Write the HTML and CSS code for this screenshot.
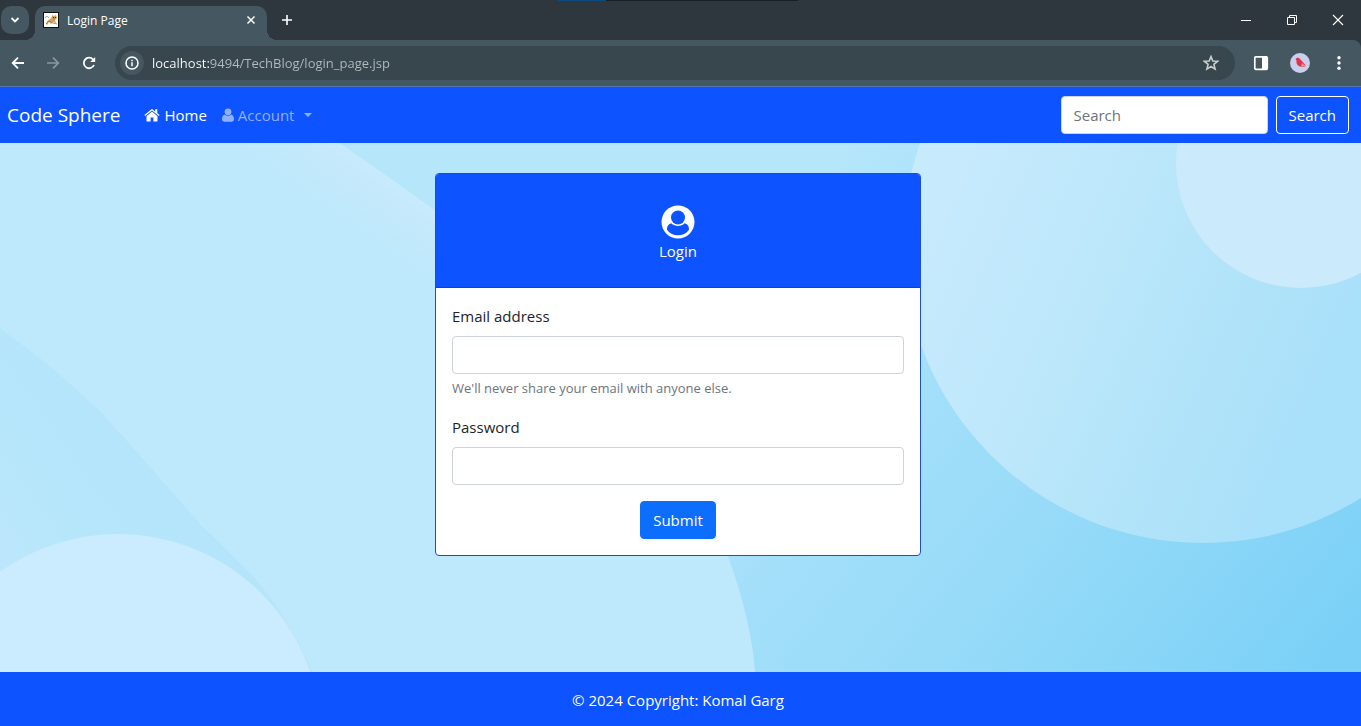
FILE: index.html
```html
<!DOCTYPE html>
<html lang="en">
<head>
<meta charset="utf-8">
<meta name="viewport" content="width=device-width, initial-scale=1">
<title>Login Page</title>
<link rel="stylesheet" href="styles.css">
</head>
<body>
<header class="browser">
  <div class="tabstrip">
    <div class="tab-search-wrap">
      <button class="tab-search" type="button" aria-label="Search tabs">
        <svg width="10" height="8" viewBox="0 0 10 8"><path d="M1.5 2 5 5.500 8.500 2" fill="none" stroke="#fff" stroke-width="1.800"/></svg>
      </button>
    </div>
    <div class="tab">
      <svg class="favicon" width="16" height="16" viewBox="0 0 16 16">
        <rect x=".5" y=".5" width="15" height="15" fill="#fff" stroke="#111"/>
        <path d="M3 12 4 9 7 7 9 5 9 3 11 4 13 3 14 6 12 8 13 11 10 10 8 12 6 10 4 13Z" fill="#d2a45c"/>
        <path d="M2 6C3 4 5 4 6 6M3 12 6 9 10 11 14 12M10 7 12 7" fill="none" stroke="#8c7757" stroke-width=".8"/>
        <circle cx="10.500" cy="5.500" r=".6" fill="#222"/><circle cx="12.500" cy="5.500" r=".6" fill="#222"/>
      </svg>
      <span class="tab-title">Login Page</span>
      <button class="icon-btn tab-close" type="button" aria-label="Close tab">
        <svg width="10" height="10" viewBox="0 0 10 10"><path d="M1.500 1.500 8.500 8.500M8.500 1.500 1.500 8.500" stroke="#fff" stroke-width="1.500"/></svg>
      </button>
    </div>
    <button class="icon-btn new-tab" type="button" aria-label="New tab">
      <svg width="12" height="12" viewBox="0 0 12 12"><path d="M6 1V11M1 6H11" stroke="#fff" stroke-width="1.600"/></svg>
    </button>
    <div class="window-controls">
      <button class="icon-btn" type="button" aria-label="Minimize"><svg width="12" height="12" viewBox="0 0 12 12"><path d="M1 6.500H11" stroke="#fff"/></svg></button>
      <button class="icon-btn" type="button" aria-label="Restore"><svg width="12" height="12" viewBox="0 0 12 12"><path d="M1.500 3.500H8.500V10.500H1.500ZM3.500 3.500V1.500H10.500V8.500H8.500" fill="none" stroke="#fff"/></svg></button>
      <button class="icon-btn" type="button" aria-label="Close"><svg width="12" height="12" viewBox="0 0 12 12"><path d="M1 1 11 11M11 1 1 11" stroke="#fff" stroke-width="1.100"/></svg></button>
    </div>
  </div>
  <div class="toolbar">
    <div class="history">
      <button class="icon-btn" type="button" aria-label="Back"><svg width="14" height="14" viewBox="0 0 14 14"><path d="M13 7H2M7 1.700 1.700 7 7 12.300" fill="none" stroke="#fff" stroke-width="1.800"/></svg></button>
      <button class="icon-btn" type="button" aria-label="Forward"><svg width="14" height="14" viewBox="0 0 14 14"><path d="M1 7H12M7 1.700 12.300 7 7 12.300" fill="none" stroke="#8b989e" stroke-width="1.700"/></svg></button>
      <button class="icon-btn" type="button" aria-label="Reload"><svg width="14" height="14" viewBox="0 0 14 14"><path d="M12 9A5.300 5.300 0 1 1 11 3.300L12.500 5" fill="none" stroke="#fff" stroke-width="1.800"/><path d="M13.200 1V6H8.200Z" fill="#fff"/></svg></button>
    </div>
    <div class="omnibox">
      <button class="site-info" type="button" aria-label="View site information">
        <svg width="14" height="14" viewBox="0 0 14 14"><circle cx="7" cy="7" r="6" fill="none" stroke="#fff" stroke-width="1.600"/><path d="M7 6.200V10.300M7 3.700V5.200" stroke="#fff" stroke-width="1.500"/></svg>
      </button>
      <input class="address" type="text" aria-label="Address" value="localhost:9494/TechBlog/login_page.jsp">
      <button class="icon-btn" type="button" aria-label="Bookmark this tab"><svg width="16" height="16" viewBox="0 0 16 16"><path d="M8 1.600 9.800 6 14.600 6.300 10.900 9.400 12.100 14.100 8 11.500 3.900 14.100 5.100 9.400 1.400 6.300 6.200 6Z" fill="none" stroke="#c9cdd0" stroke-width="1.600"/></svg></button>
    </div>
    <div class="tools">
      <button class="icon-btn" type="button" aria-label="Side panel"><svg width="16" height="16" viewBox="0 0 16 16"><rect x="1.800" y="1.800" width="12.500" height="12.500" rx="1" fill="none" stroke="#fff" stroke-width="1.700"/><path d="M9 1H14V15H9Z" fill="#fff"/></svg></button>
      <button class="icon-btn" type="button" aria-label="Profile"><svg width="20" height="20" viewBox="0 0 20 20"><circle cx="10" cy="10" r="10" fill="#c9cfec"/><path d="M5.500 6C7 4 9 4.500 10 6L15.500 12 15 14 11 13.500C8 13.500 6 11 6.500 7.500Z" fill="#e0344d"/><path d="M12 10 15.500 12.500 15 14 11 13Z" fill="#f08a8d"/></svg></button>
      <button class="icon-btn" type="button" aria-label="Menu"><svg width="16" height="16" viewBox="0 0 16 16"><circle cx="8" cy="2.700" r="1.700" fill="#fff"/><circle cx="8" cy="8" r="1.700" fill="#fff"/><circle cx="8" cy="13.300" r="1.700" fill="#fff"/></svg></button>
    </div>
  </div>
</header>

<nav class="navbar">
  <a class="brand" href="#">Code Sphere</a>
  <a class="nav-item active" href="#">
    <svg width="16" height="14" viewBox="0 0 16 14"><path d="M8 3.600 2.500 8.200V12.900Q2.500 13.400 3 13.400H6.600V9.600H9.400V13.400H13Q13.500 13.400 13.500 12.900V8.200Z" fill="#fff"/><path d="M13.300 5.300V1.200H11.200V3.400L8.800 1.400Q8 .8 7.200 1.400L.4 7.100 1.200 8 8 2.400 14.800 8 15.600 7.100Z" fill="#fff"/></svg>
    Home
  </a>
  <button class="nav-item dropdown" type="button" aria-haspopup="true">
    <svg width="12" height="14" viewBox="0 0 12 14"><circle cx="6" cy="3.800" r="3.400" fill="currentColor"/><path d="M2.700 6.500C.8 7 0 9 0 11.200 0 12.800 1 13.700 2.300 13.700H9.700C11 13.700 12 12.800 12 11.200 12 9 11.200 7 9.300 6.500 7.500 8.300 4.500 8.300 2.700 6.500Z" fill="currentColor"/></svg>
    Account
    <svg class="caret" width="8" height="4" viewBox="0 0 8 4"><path d="M0 0H8L4 4Z" fill="currentColor"/></svg>
  </button>
  <form class="search" role="search">
    <input class="field search-field" type="search" placeholder="Search" aria-label="Search">
    <button class="btn btn-outline" type="button">Search</button>
  </form>
</nav>

<main class="page">
  <svg class="backdrop" viewBox="0 0 1361 529" preserveAspectRatio="xMidYMid slice" aria-hidden="true">
    <defs>
      <linearGradient id="sky" gradientUnits="userSpaceOnUse" x1="850" y1="7" x2="1396" y2="448">
        <stop offset="0" stop-color="#b5e6fa"/><stop offset=".28" stop-color="#a4dffa"/><stop offset=".58" stop-color="#95daf8"/><stop offset="1" stop-color="#7ad0f7"/>
      </linearGradient>
      <linearGradient id="orb" gradientUnits="userSpaceOnUse" x1="920" y1="60" x2="1330" y2="240">
        <stop offset="0" stop-color="#c8eafd"/><stop offset=".4" stop-color="#bde7fb"/><stop offset=".65" stop-color="#b3e4f9"/><stop offset="1" stop-color="#a9e0fa"/>
      </linearGradient>
      <linearGradient id="rim" gradientUnits="userSpaceOnUse" x1="395" y1="38" x2="360" y2="88">
        <stop offset="0" stop-color="#c8eafc"/><stop offset="1" stop-color="#bee8fb"/>
      </linearGradient>
      <linearGradient id="shade" gradientUnits="userSpaceOnUse" x1="160" y1="340" x2="30" y2="430">
        <stop offset="0" stop-color="#b5e5fa"/><stop offset=".6" stop-color="#b6e6fa"/><stop offset="1" stop-color="#bbe6fc"/>
      </linearGradient>
    </defs>
    <rect width="1361" height="529" fill="url(#sky)"/>
    <path d="M0 0H340L435 67Q640 190 728 413 752 480 755 529H0Z" fill="url(#rim)"/>
    <path d="M0 185 50 223 100 268 150 324 200 381 250 430Q288 472 312 529H0Z" fill="url(#shade)"/>
    <circle cx="118" cy="594" r="203" fill="#cbebfe"/>
    <circle cx="1203" cy="100" r="300" fill="url(#orb)"/>
    <circle cx="1301" cy="20" r="125" fill="#cbebfc"/>
  </svg>
  <form class="card">
    <div class="card-header">
      <svg width="34" height="34" viewBox="0 0 34 34"><circle cx="17" cy="17" r="16.500" fill="#fff"/><circle cx="17" cy="12.500" r="7" fill="#0d53ff"/><path d="M10.300 18.200C7 19 5.800 22 6 24.700 8.600 28.300 12.600 30.300 17 30.300S25.400 28.300 28 24.700C28.200 22 27 19 23.700 18.200 20 21.800 14 21.800 10.300 18.200Z" fill="#0d53ff"/></svg>
      <span>Login</span>
    </div>
    <div class="card-body">
      <div class="group">
        <label class="label" for="email">Email address</label>
        <input class="field" id="email" type="email" aria-describedby="hint">
        <small class="hint" id="hint">We'll never share your email with anyone else.</small>
      </div>
      <div class="group">
        <label class="label" for="password">Password</label>
        <input class="field" id="password" type="password">
      </div>
      <button class="btn btn-primary" type="button">Submit</button>
    </div>
  </form>
</main>

<footer class="footer">© 2024 Copyright: Komal Garg</footer>
</body>
</html>
```

FILE: styles.css
```css
* { box-sizing: border-box; }
body {
  margin: 0;
  min-height: 100vh;
  display: flex;
  flex-direction: column;
  font: 15px/24px "Open Sans", "Noto Sans", sans-serif;
  color: #212529;
}
svg { display: block; flex: none; }
button, input { font: inherit; margin: 0; }
button { cursor: pointer; }
a { text-decoration: none; }

/* Browser frame */
.browser { background: #2d373d; border-bottom: 1px solid #5878ad; }
.tabstrip {
  display: flex;
  height: 40px;
  background: linear-gradient(#0d4a80, #0d4a80) 558px 0 / 48px 1px no-repeat,
    linear-gradient(#172022, #172022) 606px 0 / 192px 1px no-repeat;
}
.tab-search-wrap {
  width: 35px;
  padding: 6px 0 0 1px;
  background: radial-gradient(circle at 0 0, transparent 10px, #455760 10px) 100% 100% / 10px 10px no-repeat;
}
.tab-search {
  width: 28px;
  height: 28px;
  padding: 0;
  display: grid;
  place-items: center;
  border: 0;
  border-radius: 10px;
  background: #455760;
}
.tab {
  width: 232px;
  height: 34px;
  margin-top: 6px;
  padding: 0 8px;
  display: flex;
  align-items: center;
  gap: 8px;
  border-radius: 10px 10px 0 0;
  background: #455760;
  color: #fff;
  font-size: 12px;
}
.tab .favicon { margin-bottom: 6px; }
.tab-title { flex: 1; padding-bottom: 5px; }
.icon-btn {
  display: grid;
  place-items: center;
  padding: 0;
  border: 0;
  background: none;
}
.tab-close { width: 16px; height: 16px; margin-bottom: 6px; }
.new-tab {
  width: 40px;
  background: radial-gradient(circle at 100% 0, transparent 10px, #455760 10px) 0 100% / 10px 10px no-repeat;
}
.window-controls { margin-left: auto; display: flex; }
.window-controls .icon-btn { width: 46px; }
.toolbar {
  height: 46px;
  display: flex;
  align-items: center;
  background: #455760;
  border-top-right-radius: 8px;
}
.history { display: flex; width: 115px; }
.history .icon-btn { width: 36px; height: 34px; }
.history .icon-btn:first-child { width: 35px; }
.omnibox {
  flex: 1;
  height: 34px;
  padding: 0 16px 0 5px;
  display: flex;
  align-items: center;
  gap: 8px;
  border-radius: 17px;
  background: #38464d;
}
.site-info {
  width: 24px;
  height: 24px;
  padding: 0;
  display: grid;
  place-items: center;
  border: 0;
  border-radius: 50%;
  background: #455760;
}
.address {
  flex: 1;
  min-width: 0;
  padding: 0;
  border: 0;
  outline: 0;
  font-size: 13px;
  color: transparent;
  background: linear-gradient(to right, #fff 58px, #b4bcc0 58px);
  -webkit-background-clip: text;
  background-clip: text;
}
.tools { display: flex; align-items: center; padding: 0 3px 0 6px; }
.tools .icon-btn { width: 39px; height: 34px; }

/* Site header */
.navbar {
  min-height: 56px;
  padding: 8px 12px 8px 7px;
  display: flex;
  align-items: center;
  background: #0d53ff;
}
.brand { margin-right: 24px; font-size: 19px; color: #fff; }
.nav-item {
  display: flex;
  align-items: center;
  gap: 4px;
  padding: 0;
  border: 0;
  background: none;
  color: #8fb0ff;
}
.nav-item.active { color: #fff; margin-right: 15px; }
.caret { margin-left: 6px; }
.search { margin-left: auto; display: flex; gap: 8px; }

.field {
  width: 100%;
  height: 38px;
  padding: 6px 12px;
  border: 1px solid #ced4da;
  border-radius: 4px;
  background: #fff;
  color: #212529;
}
.field::placeholder { color: #6c757d; opacity: 1; }
.search-field { width: 207px; }
.btn {
  height: 38px;
  padding: 0 12px;
  border: 1px solid #0d6efd;
  border-radius: 4px;
  color: #fff;
}
.btn-primary { align-self: center; background: #0d6efd; }
.btn-outline { border-color: #fff; background: transparent; }

/* Login page */
.page {
  position: relative;
  flex: 1;
  padding: 30px 5px 30px 0;
  display: flex;
  justify-content: center;
  align-items: flex-start;
  overflow: hidden;
}
.backdrop { position: absolute; inset: 0; width: 100%; height: 100%; }
.card {
  position: relative;
  width: 100%;
  max-width: 486px;
  border: 1px solid #1a4fc8;
  border-radius: 4px;
  background: #fff;
  overflow: hidden;
}
.card-header {
  padding: 31px 16px 24px;
  display: flex;
  flex-direction: column;
  align-items: center;
  border-bottom: 1px solid #0b43cc;
  background: #0d53ff;
  color: #fff;
}
.card-body { padding: 16px; display: flex; flex-direction: column; gap: 16px; }
.group { display: flex; flex-direction: column; }
.label { margin-bottom: 8px; }
.hint { margin-top: 4px; font-size: 13px; line-height: 21px; color: #6c757d; }
.footer {
  padding: 16px 5px 14px 0;
  background: #0d53ff;
  color: #fff;
  text-align: center;
}
```
